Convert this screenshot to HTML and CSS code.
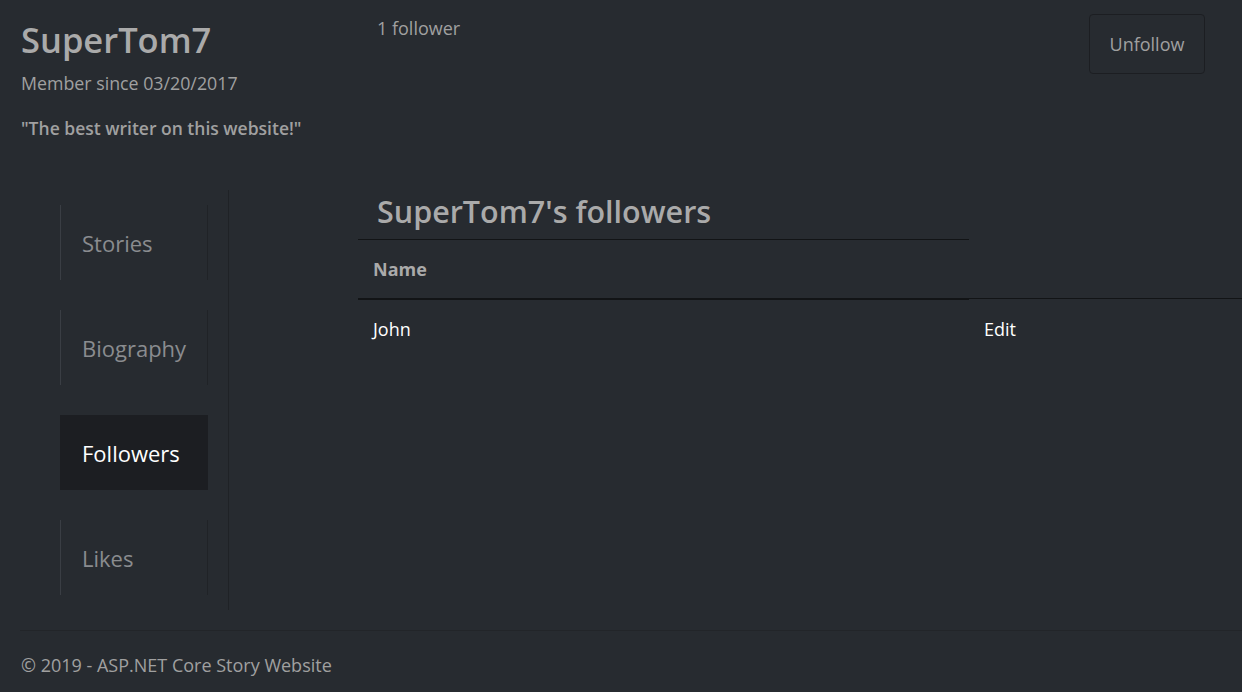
FILE: index.html
```html
<!DOCTYPE html>
<html lang="en">
<head>
<meta charset="utf-8">
<title>SuperTom7</title>
<link rel="stylesheet" href="styles.css">
</head>
<body>
<header class="profile-head">
  <div class="profile">
    <h1 class="name">SuperTom7</h1>
    <p class="since">Member since 03/20/2017</p>
    <p class="quote">"The best writer on this website!"</p>
  </div>
  <div class="count">1 follower</div>
  <button class="btn-unfollow" type="button">Unfollow</button>
</header>
<main class="main">
  <nav class="sidebar">
    <a class="nav-item" href="#">Stories</a>
    <a class="nav-item" href="#">Biography</a>
    <a class="nav-item active" href="#">Followers</a>
    <a class="nav-item" href="#">Likes</a>
  </nav>
  <section class="content">
    <h2 class="title">SuperTom7's followers</h2>
    <table class="table">
      <thead>
        <tr><th>Name</th></tr>
      </thead>
      <tbody>
        <tr><td class="col-name">John</td><td class="col-act">Edit</td></tr>
      </tbody>
    </table>
  </section>
</main>
<footer class="footer">
  <p>&copy; 2019 - ASP.NET Core Story Website</p>
</footer>
</body>
</html>
```

FILE: styles.css
```css
* { box-sizing: border-box; }
html, body { margin: 0; padding: 0; }
body {
  background: #272b30;
  color: #aaaaaa;
  font-family: "Open Sans", "Noto Sans", sans-serif;
  font-size: 18px;
  overflow: hidden;
  height: 692px;
}
.profile-head {
  display: flex;
  align-items: flex-start;
  padding: 14px 37px 0 21px;
  height: 190px;
}
.profile { width: 356px; }
.name {
  margin: 6px 0 0;
  font-size: 34.5px;
  font-weight: 600;
  line-height: 40px;
  color: #aaaaaa;
}
.since { margin: 10px 0 0; font-size: 17.8px; line-height: 26px; color: #a0a0a0; }
.quote { margin: 19px 0 0; font-size: 17.5px; line-height: 26px; font-weight: 600; color: #a0a0a0; }
.count { flex: 1; line-height: 26px; padding-top: 1px; color: #a0a0a0; }
.btn-unfollow {
  width: 116px;
  height: 60px;
  background: transparent;
  border: 1px solid #1c1e22;
  border-radius: 4px;
  color: #a0a0a0;
  font-family: inherit;
  font-size: 18px;
}
.main { display: flex; align-items: flex-start; height: 440px; }
.sidebar {
  margin-left: 20px;
  width: 209px;
  padding: 15px 0 15px 40px;
  border-right: 1px solid #1f2226;
  display: flex;
  flex-direction: column;
  gap: 30px;
}
.nav-item {
  display: flex;
  align-items: center;
  width: 148px;
  height: 75px;
  padding-left: 21px;
  border-left: 1px solid #3a3e44;
  border-right: 1px solid #202327;
  color: #8a8c8f;
  text-decoration: none;
  font-size: 22px;
}
.nav-item.active {
  background: #1c1e22;
  color: #ffffff;
  border-color: #1c1e22;
}
.content { flex: 1; padding-left: 129px; }
.title {
  margin: 0;
  padding: 0 0 0 19px;
  height: 49px;
  font-size: 30.5px;
  font-weight: 600;
  line-height: 42px;
  color: #aaaaaa;
}
.table { border-collapse: collapse; width: 884px; }
.table th {
  text-align: left;
  width: 611px;
  height: 59px;
  padding: 0 15px;
  border-top: 1px solid #121416;
  border-bottom: 2px solid #121416;
  font-weight: 700;
  color: #aaaaaa;
}
.table td {
  height: 60px;
  padding: 0 15px;
  border-top: 1px solid #121416;
  color: #ffffff;
}
.footer {
  margin-left: 20px;
  border-top: 1px solid #222529;
  padding: 0 0 0 1px;
}
.footer p { margin: 0; line-height: 68px; color: #a0a0a0; }
```
